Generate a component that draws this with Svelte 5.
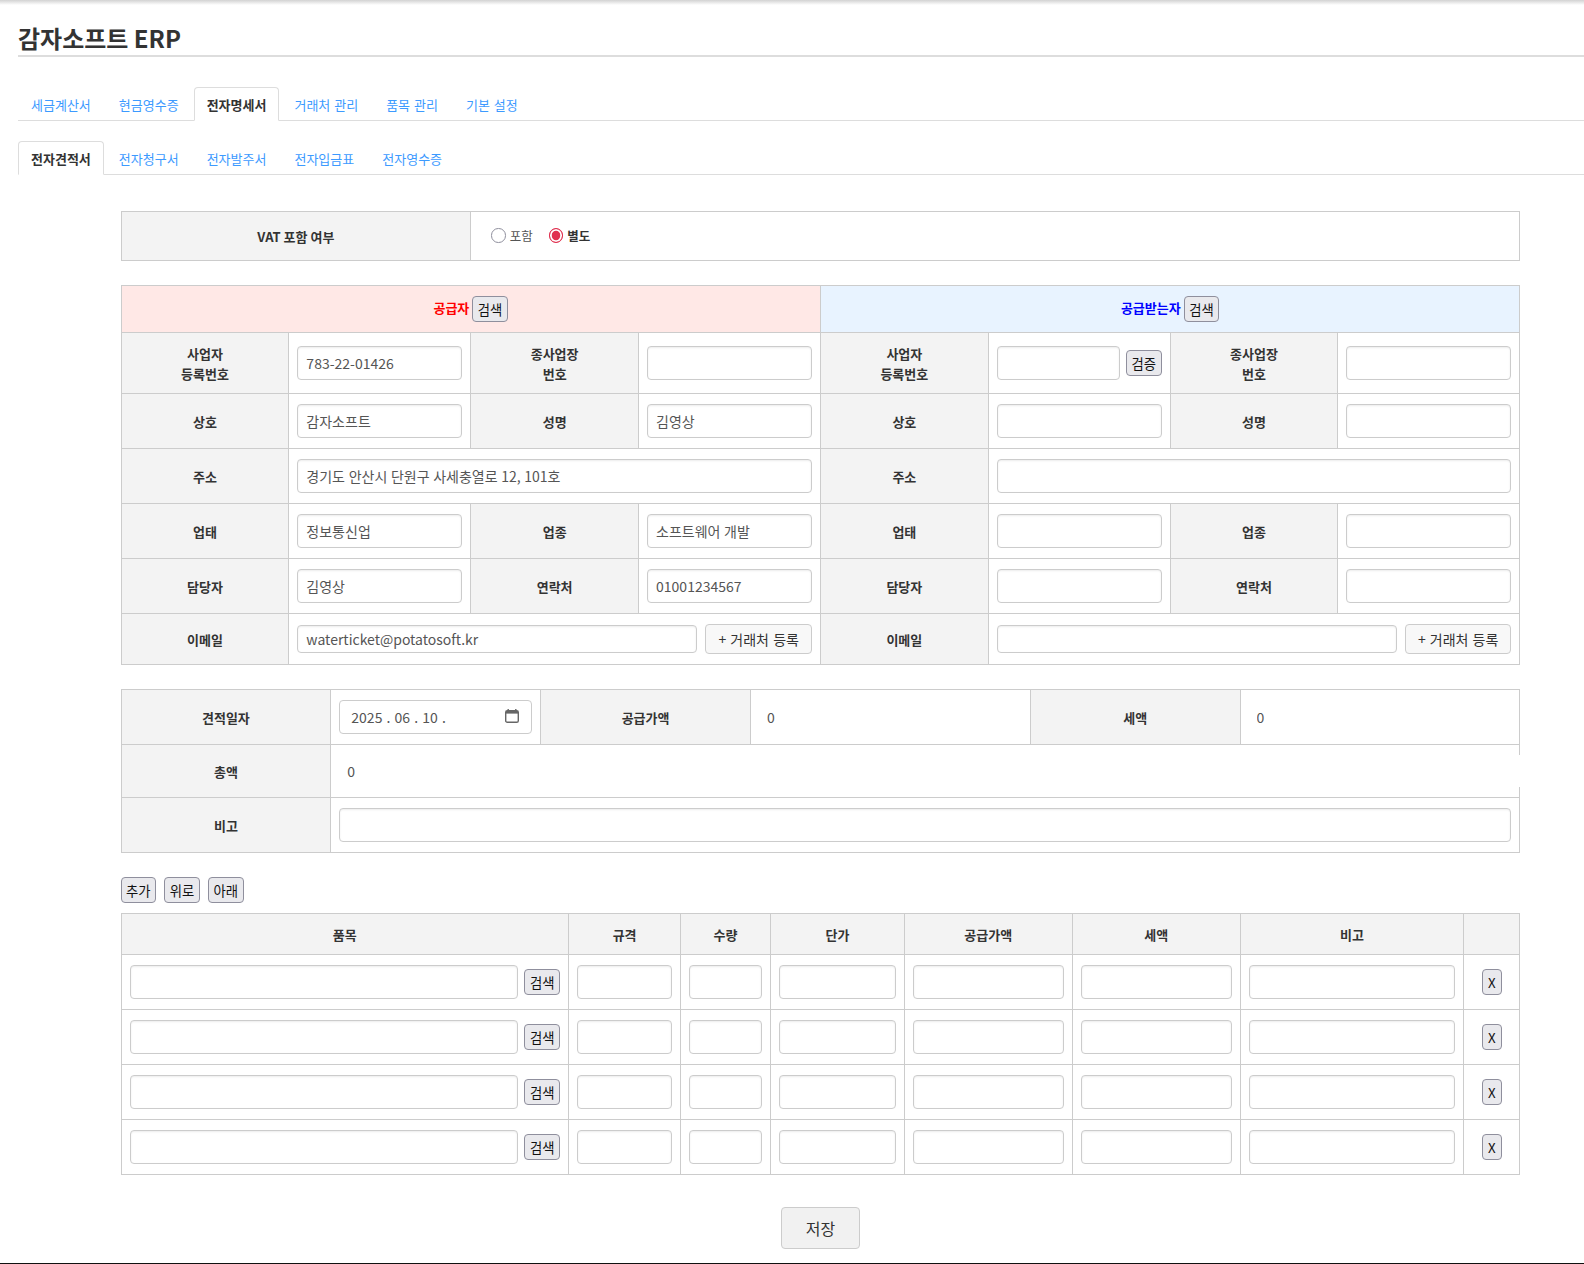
<script lang="ts">
	const mainTabs = ['세금계산서', '현금영수증', '전자명세서', '거래처 관리', '품목 관리', '기본 설정'];
	const subTabs = ['전자견적서', '전자청구서', '전자발주서', '전자입금표', '전자영수증'];

	const supplier = {
		name: '감자소프트',
		owner: '김영상',
		address: '경기도 안산시 단원구 사세충열로 12, 101호',
		bizType: '정보통신업',
		bizItem: '소프트웨어 개발',
		manager: '김영상',
		phone: '01001234567',
		email: 'waterticket@potatosoft.kr'
	};
	const buyer = { name: '', owner: '', address: '', bizType: '', bizItem: '', manager: '', phone: '', email: '' };

	let vat = $state('별도');
	let rows = $state([0, 1, 2, 3]);
</script>

{#snippet party(regNo, verify)}
	<th>사업자<br />등록번호</th>
	<td>
		{#if verify}
			<div class="inline">
				<input value={regNo} />
				<button class="btn">검증</button>
			</div>
		{:else}
			<input value={regNo} />
		{/if}
	</td>
	<th>종사업장<br />번호</th>
	<td><input /></td>
{/snippet}

{#snippet pair(l1, v1, l2, v2)}
	<th>{l1}</th>
	<td><input value={v1} /></td>
	<th>{l2}</th>
	<td><input value={v2} /></td>
{/snippet}

{#snippet email(value)}
	<th>이메일</th>
	<td colspan="3">
		<div class="inline mail">
			<input {value} />
			<button class="add">+ 거래처 등록</button>
		</div>
	</td>
{/snippet}

<div class="page">
	<h1>감자소프트 ERP</h1>

	<ul class="tabs main">
		{#each mainTabs as t}
			<li class:active={t === '전자명세서'}>{t}</li>
		{/each}
	</ul>
	<ul class="tabs sub">
		{#each subTabs as t}
			<li class:active={t === '전자견적서'}>{t}</li>
		{/each}
	</ul>

	<div class="content">
		<table class="vat">
			<colgroup>
				<col class="w25" /><col class="w75" />
			</colgroup>
			<tbody>
				<tr>
					<th>VAT 포함 여부</th>
					<td>
						<label class:on={vat === '포함'}><input type="radio" name="vat" value="포함" bind:group={vat} />포함</label>
						<label class:on={vat === '별도'}><input type="radio" name="vat" value="별도" bind:group={vat} />별도</label>
					</td>
				</tr>
			</tbody>
		</table>

		<table class="parties">
			<colgroup>
				<col class="l" /><col class="v" /><col class="l" /><col class="v" />
				<col class="l" /><col class="v" /><col class="l" /><col class="v" />
			</colgroup>
			<tbody>
				<tr>
					<th colspan="4" class="head red">공급자 <button class="btn">검색</button></th>
					<th colspan="4" class="head blue">공급받는자 <button class="btn">검색</button></th>
				</tr>
				<tr>
					{@render party('783-22-01426', false)}
					{@render party('', true)}
				</tr>
				<tr>
					{@render pair('상호', supplier.name, '성명', supplier.owner)}
					{@render pair('상호', buyer.name, '성명', buyer.owner)}
				</tr>
				<tr>
					<th>주소</th>
					<td colspan="3"><input value={supplier.address} /></td>
					<th>주소</th>
					<td colspan="3"><input value={buyer.address} /></td>
				</tr>
				<tr>
					{@render pair('업태', supplier.bizType, '업종', supplier.bizItem)}
					{@render pair('업태', buyer.bizType, '업종', buyer.bizItem)}
				</tr>
				<tr>
					{@render pair('담당자', supplier.manager, '연락처', supplier.phone)}
					{@render pair('담당자', buyer.manager, '연락처', buyer.phone)}
				</tr>
				<tr>
					{@render email(supplier.email)}
					{@render email(buyer.email)}
				</tr>
			</tbody>
		</table>

		<table class="summary">
			<colgroup>
				<col class="a" /><col class="a" /><col class="a" /><col class="b" /><col class="a" /><col class="b" />
			</colgroup>
			<tbody>
				<tr>
					<th>견적일자</th>
					<td>
						<div class="date">
							<span>2025 . 06 . 10 .</span>
							<svg width="14" height="14" viewBox="0 0 14 14" aria-hidden="true">
								<path d="M3.2 0v2.5M10.8 0v2.5" stroke="#666" stroke-width="1.4" fill="none" />
								<rect x="0.7" y="1.7" width="12.6" height="11.6" rx="1.6" stroke="#666" stroke-width="1.4" fill="none" />
								<rect x="1" y="2" width="12" height="2.6" fill="#666" />
							</svg>
						</div>
					</td>
					<th>공급가액</th>
					<td><input class="plain" readonly value="0" /></td>
					<th>세액</th>
					<td><input class="plain" readonly value="0" /></td>
				</tr>
				<tr>
					<th>총액</th>
					<td colspan="5"><input class="plain over" readonly value="0" /></td>
				</tr>
				<tr>
					<th>비고</th>
					<td colspan="5"><input /></td>
				</tr>
			</tbody>
		</table>

		<div class="actions">
			<button class="btn">추가</button>
			<button class="btn">위로</button>
			<button class="btn">아래</button>
		</div>

		<table class="items">
			<colgroup>
				<col class="c32" /><col class="c8" /><col class="c64" /><col class="c96" />
				<col class="c12" /><col class="c12" /><col class="c16" /><col class="c4" />
			</colgroup>
			<thead>
				<tr>
					<th>품목</th><th>규격</th><th>수량</th><th>단가</th><th>공급가액</th><th>세액</th><th>비고</th><th></th>
				</tr>
			</thead>
			<tbody>
				{#each rows as r (r)}
					<tr>
						<td>
							<div class="inline">
								<input />
								<button class="btn">검색</button>
							</div>
						</td>
						<td><input /></td>
						<td><input /></td>
						<td><input /></td>
						<td><input /></td>
						<td><input /></td>
						<td><input /></td>
						<td class="center"><button class="btn x">X</button></td>
					</tr>
				{/each}
			</tbody>
		</table>

		<div class="save">
			<button>저장</button>
		</div>
	</div>
</div>

<style>
	:global(body) {
		margin: 0;
		background: #fff;
		font-family: "Noto Sans CJK KR", "Noto Sans", sans-serif;
		color: #333;
	}
	.page {
		box-sizing: border-box;
		height: 1264px;
		padding: 1px 0 0 18px;
		overflow: hidden;
		border-bottom: 1px solid #111;
		background: linear-gradient(#d2d2d2, #fff 5px);
	}
	h1 {
		margin: 19px 0 0;
		padding-bottom: 0;
		height: 35px;
		line-height: 35px;
		font-size: 24px;
		font-weight: 700;
		color: #333;
		border-bottom: 2px solid #ddd;
	}
	.tabs {
		display: flex;
		gap: 2px;
		list-style: none;
		margin: 0;
		padding: 0;
		border-bottom: 1px solid #ddd;
	}
	.tabs.main {
		margin-top: 30px;
	}
	.tabs.sub {
		margin-top: 20px;
	}
	.tabs li {
		box-sizing: border-box;
		height: 33px;
		padding: 7px 12px 5px;
		line-height: 20px;
		font-size: 13px;
		word-spacing: 1px;
		color: #3c9aff;
		border: 1px solid transparent;
		border-radius: 4px 4px 0 0;
		margin-bottom: -1px;
	}
	.tabs li.active {
		height: 34px;
		color: #333;
		font-weight: 700;
		background: #fff;
		border-color: #ddd #ddd #fff;
	}
	.content {
		width: 1399.9px;
		margin: 36px 0 0 102.5px;
	}
	table {
		width: 100%;
		table-layout: fixed;
		border-collapse: collapse;
		margin-bottom: 24px;
	}
	th,
	td {
		border: 1px solid #ccc;
		padding: 10px 8px;
		line-height: 20px;
		font-size: 13px;
		vertical-align: middle;
	}
	th {
		padding: 11px 8px 9px;
		background: #f3f3f3;
		font-weight: 700;
		text-align: center;
		color: #333;
	}
	input {
		display: block;
		box-sizing: border-box;
		width: 100%;
		height: 34px;
		margin: 0;
		padding: 0 8px;
		font: inherit;
		font-size: 14px;
		word-spacing: 0.5px;
		color: #555;
		background: #fff;
		border: 1px solid #ccc;
		border-radius: 4px;
		box-shadow: inset 0 1px 2px rgba(0, 0, 0, 0.075);
		outline: none;
	}
	.btn {
		flex: none;
		box-sizing: border-box;
		height: 26px;
		padding: 2px 4.6px 0;
		font: inherit;
		font-size: 13.33px;
		font-weight: 400;
		line-height: 22px;
		color: #111;
		background: #e9e9ed;
		border: 1px solid #8f8f9d;
		border-radius: 4px;
		vertical-align: middle;
	}
	.btn.x {
		width: 20px;
		padding: 2px 0 0;
	}
	.inline {
		display: flex;
		align-items: center;
		gap: 6.2px;
	}
	.inline input {
		flex: 1;
		min-width: 0;
	}
	.mail {
		gap: 8px;
	}
	.mail input {
		height: 28px;
	}
	.add {
		flex: none;
		height: 30px;
		padding: 0 12px;
		font: inherit;
		font-size: 14px;
		word-spacing: 1px;
		color: #333;
		background: #f8f8f8;
		border: 1px solid #ccc;
		border-radius: 4px;
	}
	col.w25 {
		width: 25%;
	}
	col.w75 {
		width: 75%;
	}
	.vat th {
		padding: 15px 8px 13px;
	}
	.vat td {
		padding: 14px 20px;
	}
	.vat label {
		display: inline-flex;
		align-items: center;
		vertical-align: top;
		gap: 4px;
		margin-top: -0.5px;
		margin-right: 13px;
		font-size: 12.5px;
		color: #555;
	}
	.vat label.on {
		font-weight: 700;
		color: #333;
	}
	.vat input {
		appearance: none;
		flex: none;
		width: 14.5px;
		height: 14.5px;
		padding: 0;
		border: 1.2px solid #8f8f9d;
		border-radius: 50%;
		box-shadow: none;
	}
	.vat input:checked {
		border: 1.5px solid #e0304f;
		background: #e0304f;
		box-shadow: inset 0 0 0 1.8px #fff;
	}
	col.l {
		width: 12%;
	}
	col.v {
		width: 13%;
	}
	th.head {
		padding: 10px 8px;
	}
	.head.red {
		color: #f00;
		background: #ffe8e6;
	}
	.head.blue {
		color: #00f;
		background: #e8f3ff;
	}
	col.a {
		width: 15%;
	}
	col.b {
		width: 20%;
	}
	.plain {
		height: 32px;
		border: none;
		border-radius: 0;
		box-shadow: none;
	}
	.plain.over {
		box-sizing: content-box;
		position: relative;
	}
	.date {
		box-sizing: border-box;
		display: flex;
		align-items: center;
		justify-content: space-between;
		height: 34px;
		padding: 0 12px 0 11px;
		font-size: 14px;
		color: #555;
		background: #fff;
		border: 1px solid #ccc;
		border-radius: 4px;
		word-spacing: 1px;
	}
	.date svg {
		margin-top: -2px;
	}
	.actions {
		display: flex;
		gap: 8px;
		margin-bottom: 10px;
	}
	col.c32 {
		width: 32%;
	}
	col.c8 {
		width: 8%;
	}
	col.c64 {
		width: 6.43%;
	}
	col.c96 {
		width: 9.57%;
	}
	col.c12 {
		width: 12%;
	}
	col.c16 {
		width: 16%;
	}
	col.c4 {
		width: 4%;
	}
	.center {
		text-align: center;
	}
	.save {
		text-align: center;
		margin-top: 32px;
	}
	.items {
		margin-bottom: 0;
	}
	.save button {
		box-sizing: border-box;
		width: 79px;
		height: 42px;
		font: inherit;
		font-size: 16px;
		color: #333;
		background: #f1f1f1;
		border: 1px solid #ccc;
		border-radius: 4px;
	}
</style>
